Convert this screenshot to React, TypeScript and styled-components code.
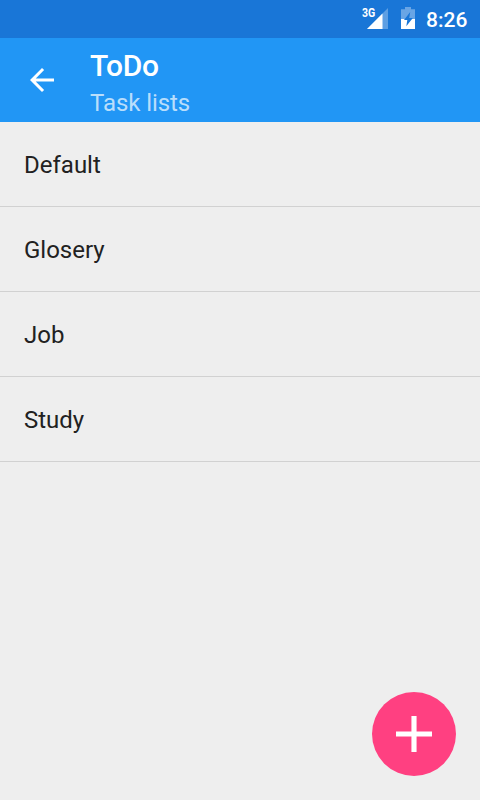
import React from 'react';
import styled, { createGlobalStyle } from 'styled-components';

const GlobalStyle = createGlobalStyle`
  * { box-sizing: border-box; }
  body { margin: 0; background: #eeeeee; font-family: Roboto, sans-serif; }
`;

const Screen = styled.div`
  position: relative;
  width: 480px;
  height: 800px;
  overflow: hidden;
  background: #eeeeee;
`;

const StatusBar = styled.div`
  display: flex;
  align-items: center;
  justify-content: flex-end;
  height: 38px;
  padding-right: 12px;
  background: #1976d7;
  color: #ffffff;
`;

const SignalGroup = styled.div`
  position: relative;
  width: 26px;
  height: 38px;
  margin-right: 13px;
  svg { display: block; }
`;

const NetworkLabel = styled.span`
  position: absolute;
  left: 0;
  top: 6px;
  font: 700 12px/14px Roboto, sans-serif;
  transform: scaleX(0.88);
  transform-origin: left;
`;

const BatteryIcon = styled.svg`
  display: block;
  width: 14px;
  height: 38px;
  margin-right: 11px;
`;

const Clock = styled.time`
  font-size: 21px;
  font-weight: 500;
  line-height: 38px;
  height: 38px;
  width: 42px;
  padding-top: 1px;
  white-space: nowrap;
`;

const Toolbar = styled.header`
  display: flex;
  height: 84px;
  background: #2196f5;
  color: #ffffff;
`;

const BackButton = styled.button`
  display: flex;
  align-items: center;
  justify-content: center;
  width: 84px;
  height: 84px;
  padding: 0;
  border: 0;
  background: none;
`;

const Titles = styled.div`
  padding: 10px 0 0 6px;
`;

const Title = styled.h1`
  margin: 0;
  font-size: 30px;
  font-weight: 500;
  line-height: 36px;
  letter-spacing: -0.25px;
`;

const Subtitle = styled.div`
  padding-top: 4px;
  font-size: 24px;
  line-height: 30px;
  letter-spacing: -0.08px;
  color: rgba(255, 255, 255, 0.7);
`;

const List = styled.ul`
  margin: 0;
  padding: 0;
  list-style: none;
`;

const Row = styled.li`
  height: 85px;
  padding: 1px 24px 0;
  border-bottom: 1px solid #d1d1d1;
  font-size: 24px;
  line-height: 84px;
  color: #212121;
`;

const AddButton = styled.button`
  position: absolute;
  right: 24px;
  bottom: 24px;
  display: flex;
  align-items: center;
  justify-content: center;
  width: 84px;
  height: 84px;
  padding: 0;
  border: 0;
  border-radius: 50%;
  background: #ff4081;
`;

const lists = ['Default', 'Glosery', 'Job', 'Study'];

export default function App() {
  return (
    <Screen>
      <GlobalStyle />
      <StatusBar>
        <SignalGroup>
          <svg width="26" height="38" viewBox="0 0 26 38">
            <path d="M26 8V29H5Z" fill="#fff" fillOpacity="0.3" />
            <path d="M20.5 13.5V29H5Z" fill="#fff" />
          </svg>
          <NetworkLabel>3G</NetworkLabel>
        </SignalGroup>
        <BatteryIcon viewBox="0 0 14 38">
          <path d="M4 7H10V9.2H14V19H0V9.2H4Z" fill="#fff" fillOpacity="0.35" />
          <path d="M0 19H14V29H0Z" fill="#fff" />
          <path d="M9.2 12L3 20H6.3L5.3 26.3L11.8 18H8.2Z" fill="#1976d7" />
        </BatteryIcon>
        <Clock>8:26</Clock>
      </StatusBar>
      <Toolbar>
        <BackButton aria-label="Back">
          <svg width="36" height="36" viewBox="0 0 24 24" fill="#fff">
            <path d="M20 11H7.83l5.59-5.59L12 4l-8 8 8 8 1.41-1.41L7.83 13H20v-2z" />
          </svg>
        </BackButton>
        <Titles>
          <Title>ToDo</Title>
          <Subtitle>Task lists</Subtitle>
        </Titles>
      </Toolbar>
      <List>
        {lists.map((name) => (
          <Row key={name}>{name}</Row>
        ))}
      </List>
      <AddButton aria-label="Add list">
        <svg width="36" height="36" viewBox="5 5 14 14" fill="#fff">
          <path d="M19 13h-6v6h-2v-6H5v-2h6V5h2v6h6v2z" />
        </svg>
      </AddButton>
    </Screen>
  );
}
